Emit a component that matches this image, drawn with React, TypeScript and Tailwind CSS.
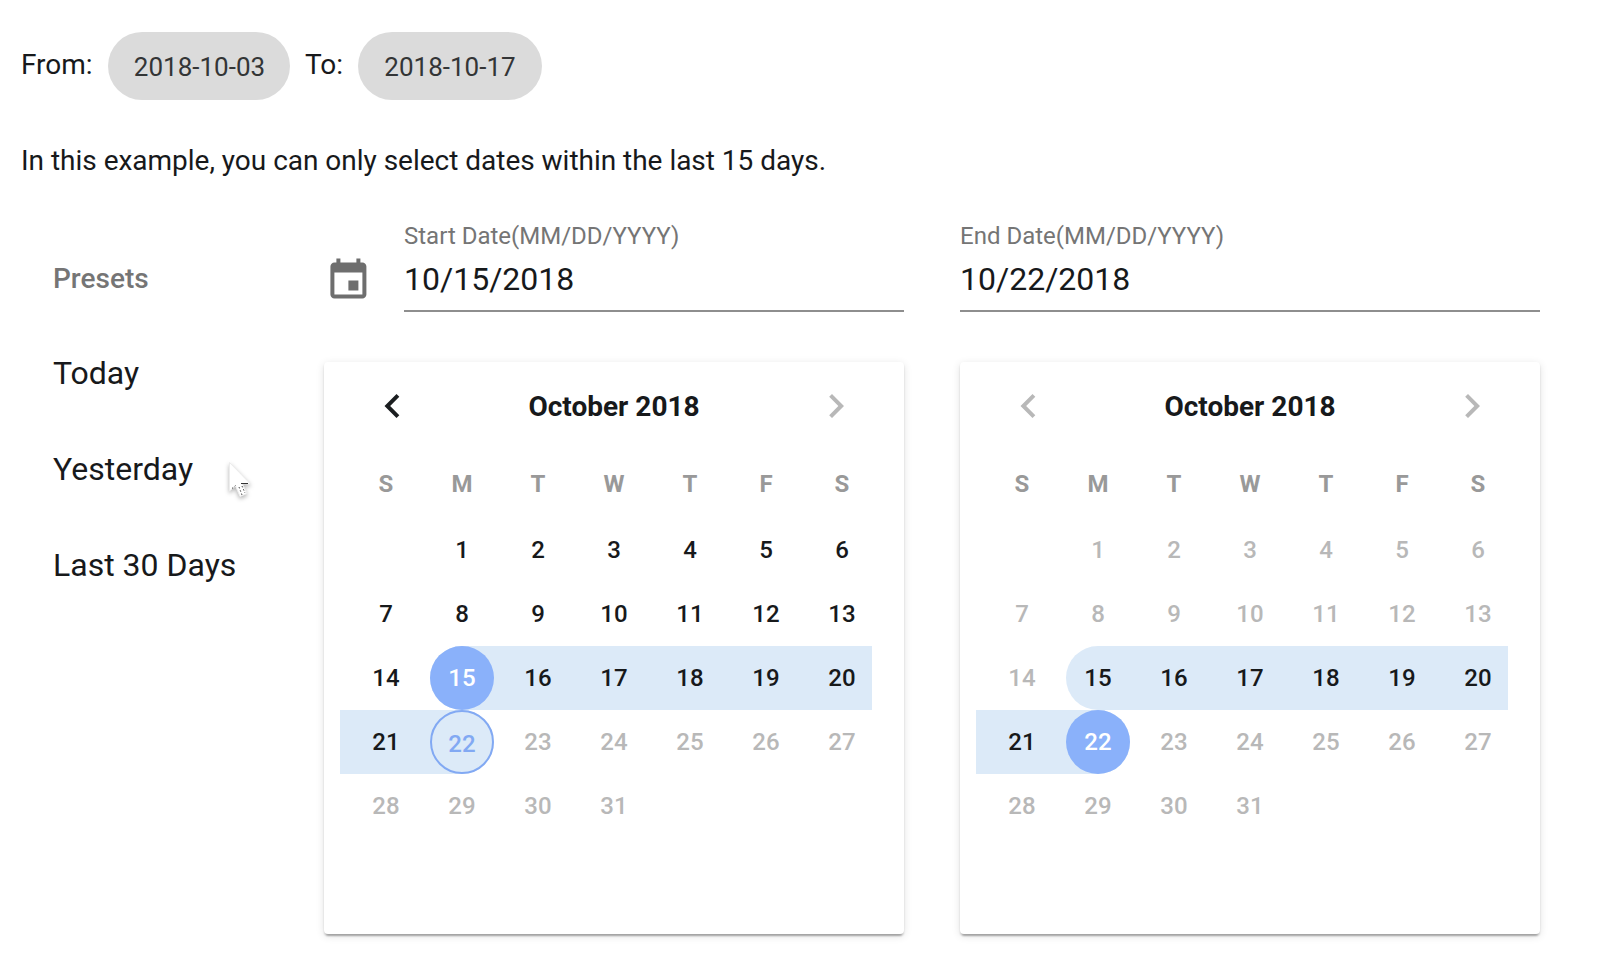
import { ReactNode } from "react";

const WEEKDAYS = ["S", "M", "T", "W", "T", "F", "S"];
const CELLS: (number | null)[] = [null, ...Array.from({ length: 31 }, (_, i) => i + 1)];
const RANGE_START = 15;
const RANGE_END = 22;

interface CalendarProps {
  enabled: [number, number];
  selected: number;
  outlined?: number;
  canGoBack: boolean;
}

function Chevron({ dir, active }: { dir: "left" | "right"; active: boolean }) {
  return (
    <button className="size-12">
      <svg viewBox="0 0 24 24" className={active ? "size-12 fill-[#1b1e20]" : "size-12 fill-[#b8b8b8]"}>
        {dir === "left" ? (
          <path d="M15.66 7.41 14.25 6l-6 6 6 6 1.41-1.41L11.080 12z" />
        ) : (
          <path d="M10 6 8.59 7.41 13.17 12l-4.58 4.59L10 18l6-6z" />
        )}
      </svg>
    </button>
  );
}

function rangeShape(day: number) {
  if (day === RANGE_START) return "left-[14px] right-0 rounded-l-full";
  if (day === RANGE_END) return "left-0 w-[78px] rounded-r-full";
  return "inset-x-0";
}

function Calendar({ enabled, selected, outlined, canGoBack }: CalendarProps) {
  return (
    <section className="flex h-[572px] w-[580px] flex-col rounded-[4px] bg-white px-4 shadow-[0_4px_2px_-2px_rgba(0,0,0,0.2),0_2px_2px_0_rgba(0,0,0,0.14),0_2px_8px_0_rgba(0,0,0,0.12)]">
      <header className="mt-5 flex h-12 items-center justify-between px-7">
        <Chevron dir="left" active={canGoBack} />
        <h2 className="pt-0.5 text-[28px] leading-8 font-bold">October 2018</h2>
        <Chevron dir="right" active={false} />
      </header>
      <div className="mt-[38px] grid w-[532px] grid-cols-7 text-2xl leading-8 font-bold text-[#999]">
        {WEEKDAYS.map((d, i) => (
          <div key={i} className="ml-[14px] w-16 text-center">
            {d}
          </div>
        ))}
      </div>
      <div className="mt-[18px] grid w-[532px] grid-cols-7 text-2xl font-medium">
        {CELLS.map((day, i) => {
          if (day === null) return <div key={i} className="h-16" />;
          const inRange = day >= RANGE_START && day <= RANGE_END;
          const isEnabled = day >= enabled[0] && day <= enabled[1];
          let tone = isEnabled ? "text-[#17191b]" : "text-[#b8b8b8]";
          if (day === selected) tone = "rounded-full bg-[#8ab1fa] text-white";
          if (day === outlined) tone = "rounded-full border-2 border-[#82a9f3] pt-[3px] text-[#82a9f3]";
          return (
            <div key={i} className="relative h-16">
              {inRange && <span className={`absolute inset-y-0 bg-[#dceaf8] ${rangeShape(day)}`} />}
              <button className={`relative z-10 ml-[14px] flex size-16 items-center justify-center ${tone}`}>{day}</button>
            </div>
          );
        })}
      </div>
    </section>
  );
}

function DateField({ label, value, className }: { label: string; value: string; className: string }) {
  return (
    <label className={`flex h-[92px] flex-col border-b-2 border-[#8e8e8e] ${className}`}>
      <span className="text-2xl leading-8 text-[#757575]">{label}</span>
      <span className="mt-[7px] text-[32px] leading-10 text-[#17191b]">{value}</span>
    </label>
  );
}

function Chip({ children, className }: { children: ReactNode; className: string }) {
  return (
    <span
      className={`flex h-[68px] items-center justify-center rounded-full bg-[#dbdbdb] pt-[3px] text-[26px] text-[#333536] ${className}`}
    >
      {children}
    </span>
  );
}

function Pointer() {
  return (
    <svg
      viewBox="0 0 32 42"
      className="pointer-events-none absolute top-[460px] left-[227px] h-[42px] w-8 drop-shadow-[0_2px_2px_rgba(0,0,0,0.3)]"
    >
      <path d="M2.500 2.500v28.500l6-5 4.500 10.500 7-3-4.500-9.500h8z" fill="#fff" stroke="#ececec" strokeWidth="1" />
      <path d="M14 23.500h7" stroke="#333" strokeWidth="1" fill="none" />
      <path d="M5 28.500l3.500-3M12 27l3 8M15 26l3 7" stroke="#444" strokeWidth="1" strokeDasharray="1.500 2" fill="none" />
    </svg>
  );
}

export default function App() {
  return (
    <main className="relative h-[958px] w-[1600px] overflow-hidden bg-white font-[Roboto,sans-serif] text-[#17191b]">
      <div className="flex h-[100px] items-center pt-8 pl-[21px] text-[28px]">
        <span className="w-[87px] pb-[3px]">From:</span>
        <Chip className="w-[182px] pl-px">2018-10-03</Chip>
        <span className="ml-[15px] w-[53px] pb-[3px]">To:</span>
        <Chip className="w-[184px]">2018-10-17</Chip>
      </div>
      <p className="mt-[45px] pl-[21px] text-[28px] leading-8 tracking-[-0.02px]">
        In this example, you can only select dates within the last 15 days.
      </p>
      <div className="mt-[43px] flex">
        <nav className="flex w-[324px] flex-col pl-[53px]">
          <h3 className="mt-[43px] text-[28px] leading-8 font-medium text-[#757575]">Presets</h3>
          <ul className="mt-[30px] text-[32px] leading-[96px]">
            <li>Today</li>
            <li>Yesterday</li>
            <li>Last 30 Days</li>
          </ul>
        </nav>
        <div className="flex gap-14">
          <div className="flex flex-col gap-[50px]">
            <div className="flex justify-between">
              <svg viewBox="-0.2 -0.2 24 24" className="mt-9 size-12 fill-[#6e6e6e]">
                <path d="M17 12h-5v5h5v-5zM16 1v2H8V1H6v2H5c-1.110 0-1.990.9-1.990 2L3 19c0 1.100.890 2 2 2h14c1.100 0 2-.9 2-2V5c0-1.100-.9-2-2-2h-1V1h-2zm3 18H5V8h14v11z" />
              </svg>
              <DateField label="Start Date(MM/DD/YYYY)" value="10/15/2018" className="w-[500px]" />
            </div>
            <Calendar enabled={[1, 22]} selected={15} outlined={22} canGoBack />
          </div>
          <div className="flex flex-col gap-[50px]">
            <DateField label="End Date(MM/DD/YYYY)" value="10/22/2018" className="w-[580px]" />
            <Calendar enabled={[15, 22]} selected={22} canGoBack={false} />
          </div>
        </div>
      </div>
      <Pointer />
    </main>
  );
}
